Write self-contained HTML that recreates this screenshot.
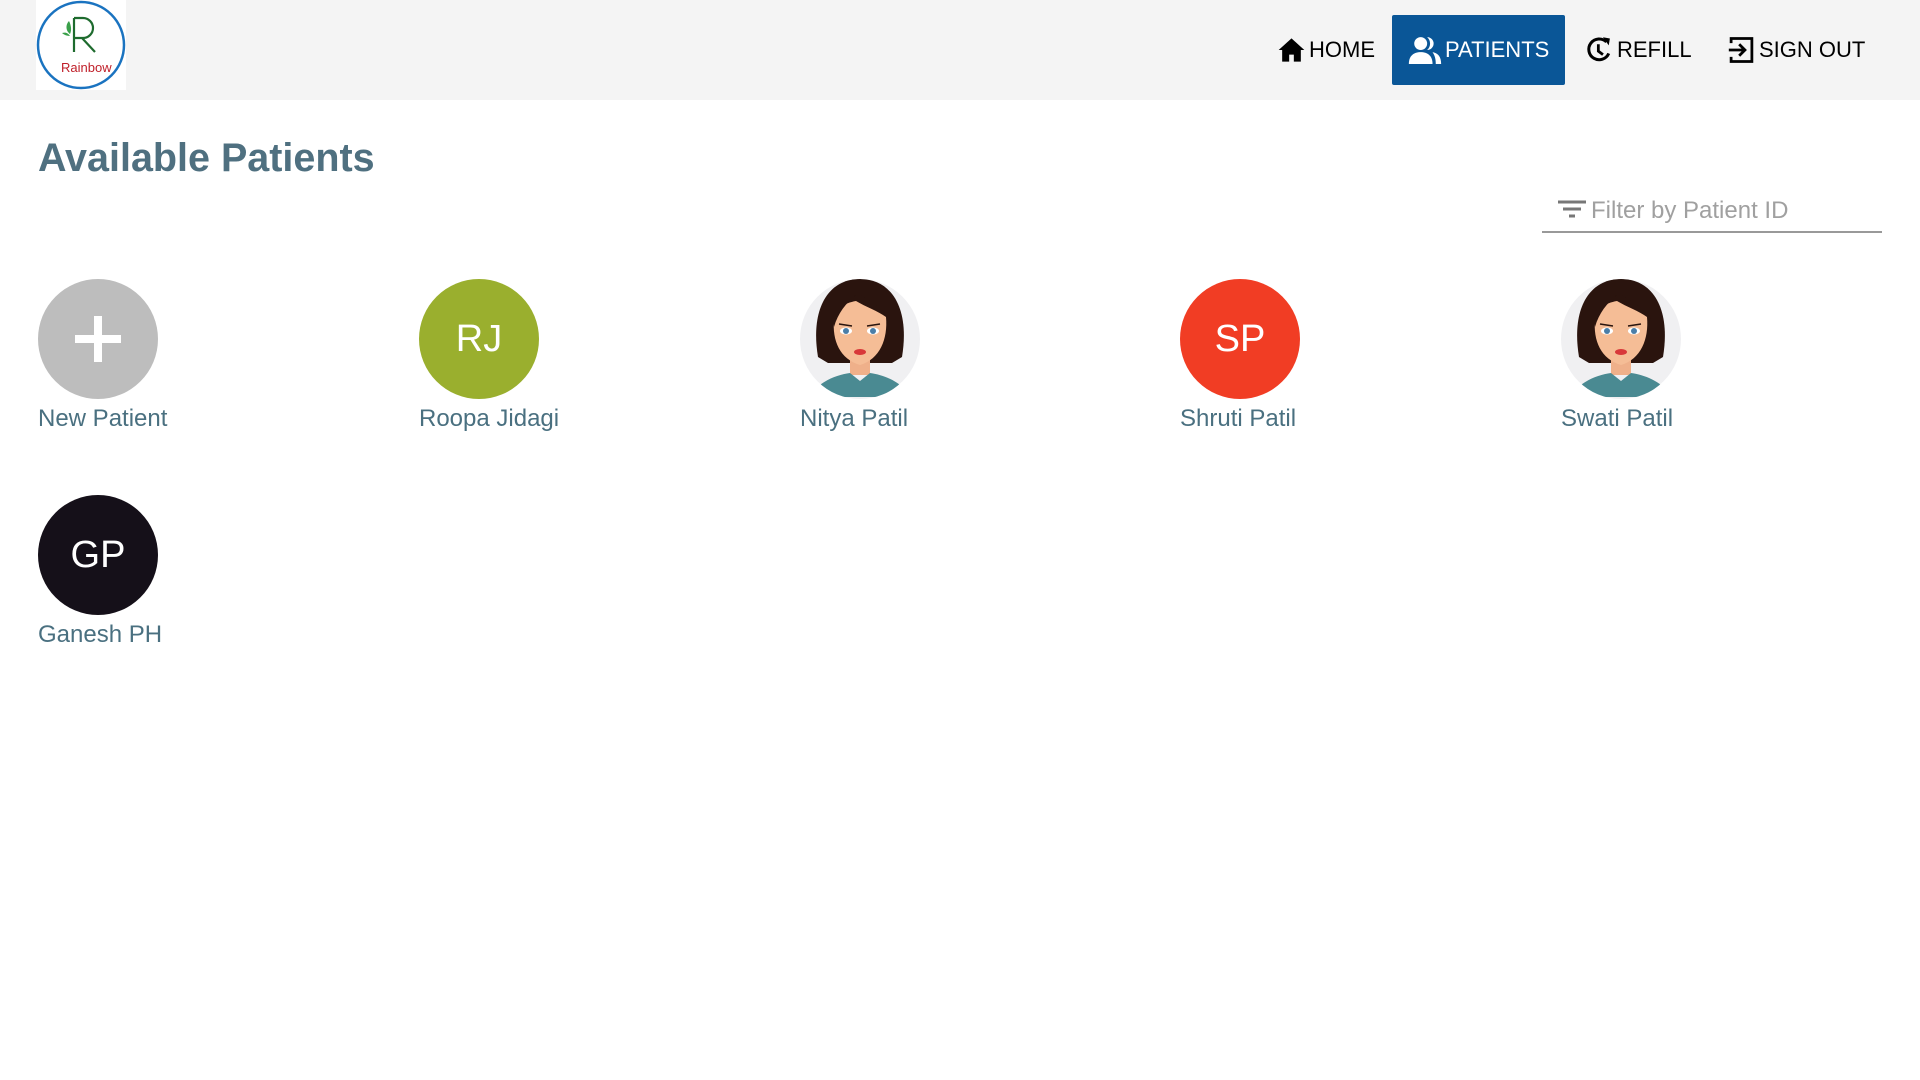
<!DOCTYPE html>
<html><head><meta charset="utf-8"><style>
*{margin:0;padding:0;box-sizing:border-box}
body{width:1920px;height:1080px;background:#fff;font-family:"Liberation Sans",Arial,sans-serif;position:relative;overflow:hidden}
.hdr{position:absolute;left:0;top:0;width:1920px;height:100px;background:#f4f4f4}
.logo{position:absolute;left:36px;top:0;width:90px;height:90px;background:#fff}
.nav{position:absolute;top:15px;height:70px;display:flex;align-items:center;font-size:22px;color:#000}
.nav svg{margin-right:3px}
h1{position:absolute;left:38px;top:136px;font-size:39.5px;font-weight:bold;color:#4f7080}
.filter{position:absolute;left:1542px;top:190px;width:340px;height:43px;border-bottom:2px solid #999}
.filter span{position:absolute;left:49px;top:7px;font-size:24px;color:#a0a0a0}
.p{position:absolute;width:300px}
.c{width:120px;height:120px;border-radius:50%;display:flex;align-items:center;justify-content:center;color:#fff;font-size:38px;overflow:hidden}
.n{margin-top:6px;font-size:24px;color:#4a7080}
</style></head><body>
<div class="hdr">
 <div class="logo"><svg width="90" height="90" viewBox="0 0 90 90">
  <circle cx="45" cy="45" r="43" fill="#fff" stroke="#1a73c0" stroke-width="2.5"/>
  <path d="M38 18v34M38 18h9a10 10 0 0 1 0 20h-9M46 38l13 14" fill="none" stroke="#1e6b2e" stroke-width="2.2"/>
  <path d="M34 34c-5-4-4-10-1-13c2 4 3 9 1 13zM34 36c-4 0-7-2-8-3c4-1 6 0 8 3z" fill="#3aa04a"/>
  <text x="25" y="72" font-size="13" fill="#c0202a" font-family="Liberation Sans">Rainbow</text>
 </svg></div>
 <div class="nav" style="left:1277px"><svg width="29" height="28" viewBox="0 0 24 24"><path d="M12 2L1 12h3v10h6v-6h4v6h6V12h3z"/></svg>HOME</div>
 <div class="nav" style="left:1392px;width:173px;background:#0a5697;color:#fff;border-radius:2px;padding-left:16px"><svg width="34" height="28" viewBox="0 0 30 26" fill="#fff"><circle cx="11" cy="7" r="6"/><path d="M0 26c0-8 5-11 11-11s11 3 11 11z"/><path d="M17 1a6 6 0 0 1 0 12a8 8 0 0 0 0-12zM22 15c5 1 8 4 8 11h-5c0-5-1-8-3-11z"/></svg>PATIENTS</div>
 <div class="nav" style="left:1585px"><svg width="29" height="30" viewBox="0 0 24 26"><path d="M18 6A9 9 0 1 0 20 16" fill="none" stroke="#000" stroke-width="2.6"/><path d="M15 2l6 1-1 6z"/><path d="M11 8v6l4 3" fill="none" stroke="#000" stroke-width="2.4"/></svg>REFILL</div>
 <div class="nav" style="left:1727px"><svg width="29" height="30" viewBox="0 0 24 26"><path d="M3 7V3h18v20H3v-4" fill="none" stroke="#000" stroke-width="2.4"/><path d="M1 13h13M10 8l5 5-5 5" fill="none" stroke="#000" stroke-width="2.4"/></svg>SIGN OUT</div>
</div>
<h1>Available Patients</h1>
<div class="filter"><svg style="position:absolute;left:16px;top:10px" width="28" height="22" viewBox="0 0 28 22"><path d="M0 2h28M5 9h18M11 16h6" stroke="#777" stroke-width="3"/></svg><span>Filter by Patient ID</span></div>

<div class="p" style="left:38px;top:279px"><div class="c" style="background:#bdbdbd"><svg width="46" height="46"><path d="M19 0h8v46h-8zM0 19h46v8H0z" fill="#fff"/></svg></div><div class="n">New Patient</div></div>
<div class="p" style="left:419px;top:279px"><div class="c" style="background:#9aaf2e">RJ</div><div class="n">Roopa Jidagi</div></div>
<div class="p" style="left:800px;top:279px"><div class="c" style="background:#f0f0f2"><svg width="120" height="120" viewBox="0 0 120 120"><path d="M18 78C10 30 28 0 60 0s50 30 42 78l-10 6H28z" fill="#2a140e"/><path d="M50 80h20v16H50z" fill="#efb08a"/><path d="M8 118c12-16 28-22 42-24l10 8 10-8c14 2 30 8 42 24z" fill="#4a8a92"/><path d="M34 40c2-10 10-16 22-18c10 6 22 10 30 16c2 22-6 42-26 48c-20-6-28-24-26-46z" fill="#f5bd96"/><path d="M56 16c-10 8-18 18-22 32l-4-24zM60 16c10 6 22 12 30 24l-2-20z" fill="#2a140e"/><ellipse cx="46" cy="52" rx="6" ry="3.5" fill="#fff"/><ellipse cx="73" cy="52" rx="6" ry="3.5" fill="#fff"/><circle cx="46" cy="52" r="3" fill="#4b7ea8"/><circle cx="73" cy="52" r="3" fill="#4b7ea8"/><path d="M39 45l13 2M80 45l-13 2" stroke="#2a140e" stroke-width="1.5"/><ellipse cx="60" cy="73" rx="6" ry="3" fill="#d8383a"/></svg></div><div class="n">Nitya Patil</div></div>
<div class="p" style="left:1180px;top:279px"><div class="c" style="background:#f13d24">SP</div><div class="n">Shruti Patil</div></div>
<div class="p" style="left:1561px;top:279px"><div class="c" style="background:#f0f0f2"><svg width="120" height="120" viewBox="0 0 120 120"><path d="M18 78C10 30 28 0 60 0s50 30 42 78l-10 6H28z" fill="#2a140e"/><path d="M50 80h20v16H50z" fill="#efb08a"/><path d="M8 118c12-16 28-22 42-24l10 8 10-8c14 2 30 8 42 24z" fill="#4a8a92"/><path d="M34 40c2-10 10-16 22-18c10 6 22 10 30 16c2 22-6 42-26 48c-20-6-28-24-26-46z" fill="#f5bd96"/><path d="M56 16c-10 8-18 18-22 32l-4-24zM60 16c10 6 22 12 30 24l-2-20z" fill="#2a140e"/><ellipse cx="46" cy="52" rx="6" ry="3.5" fill="#fff"/><ellipse cx="73" cy="52" rx="6" ry="3.5" fill="#fff"/><circle cx="46" cy="52" r="3" fill="#4b7ea8"/><circle cx="73" cy="52" r="3" fill="#4b7ea8"/><path d="M39 45l13 2M80 45l-13 2" stroke="#2a140e" stroke-width="1.5"/><ellipse cx="60" cy="73" rx="6" ry="3" fill="#d8383a"/></svg></div><div class="n">Swati Patil</div></div>
<div class="p" style="left:38px;top:495px"><div class="c" style="background:#151019">GP</div><div class="n">Ganesh PH</div></div>
</body></html>
